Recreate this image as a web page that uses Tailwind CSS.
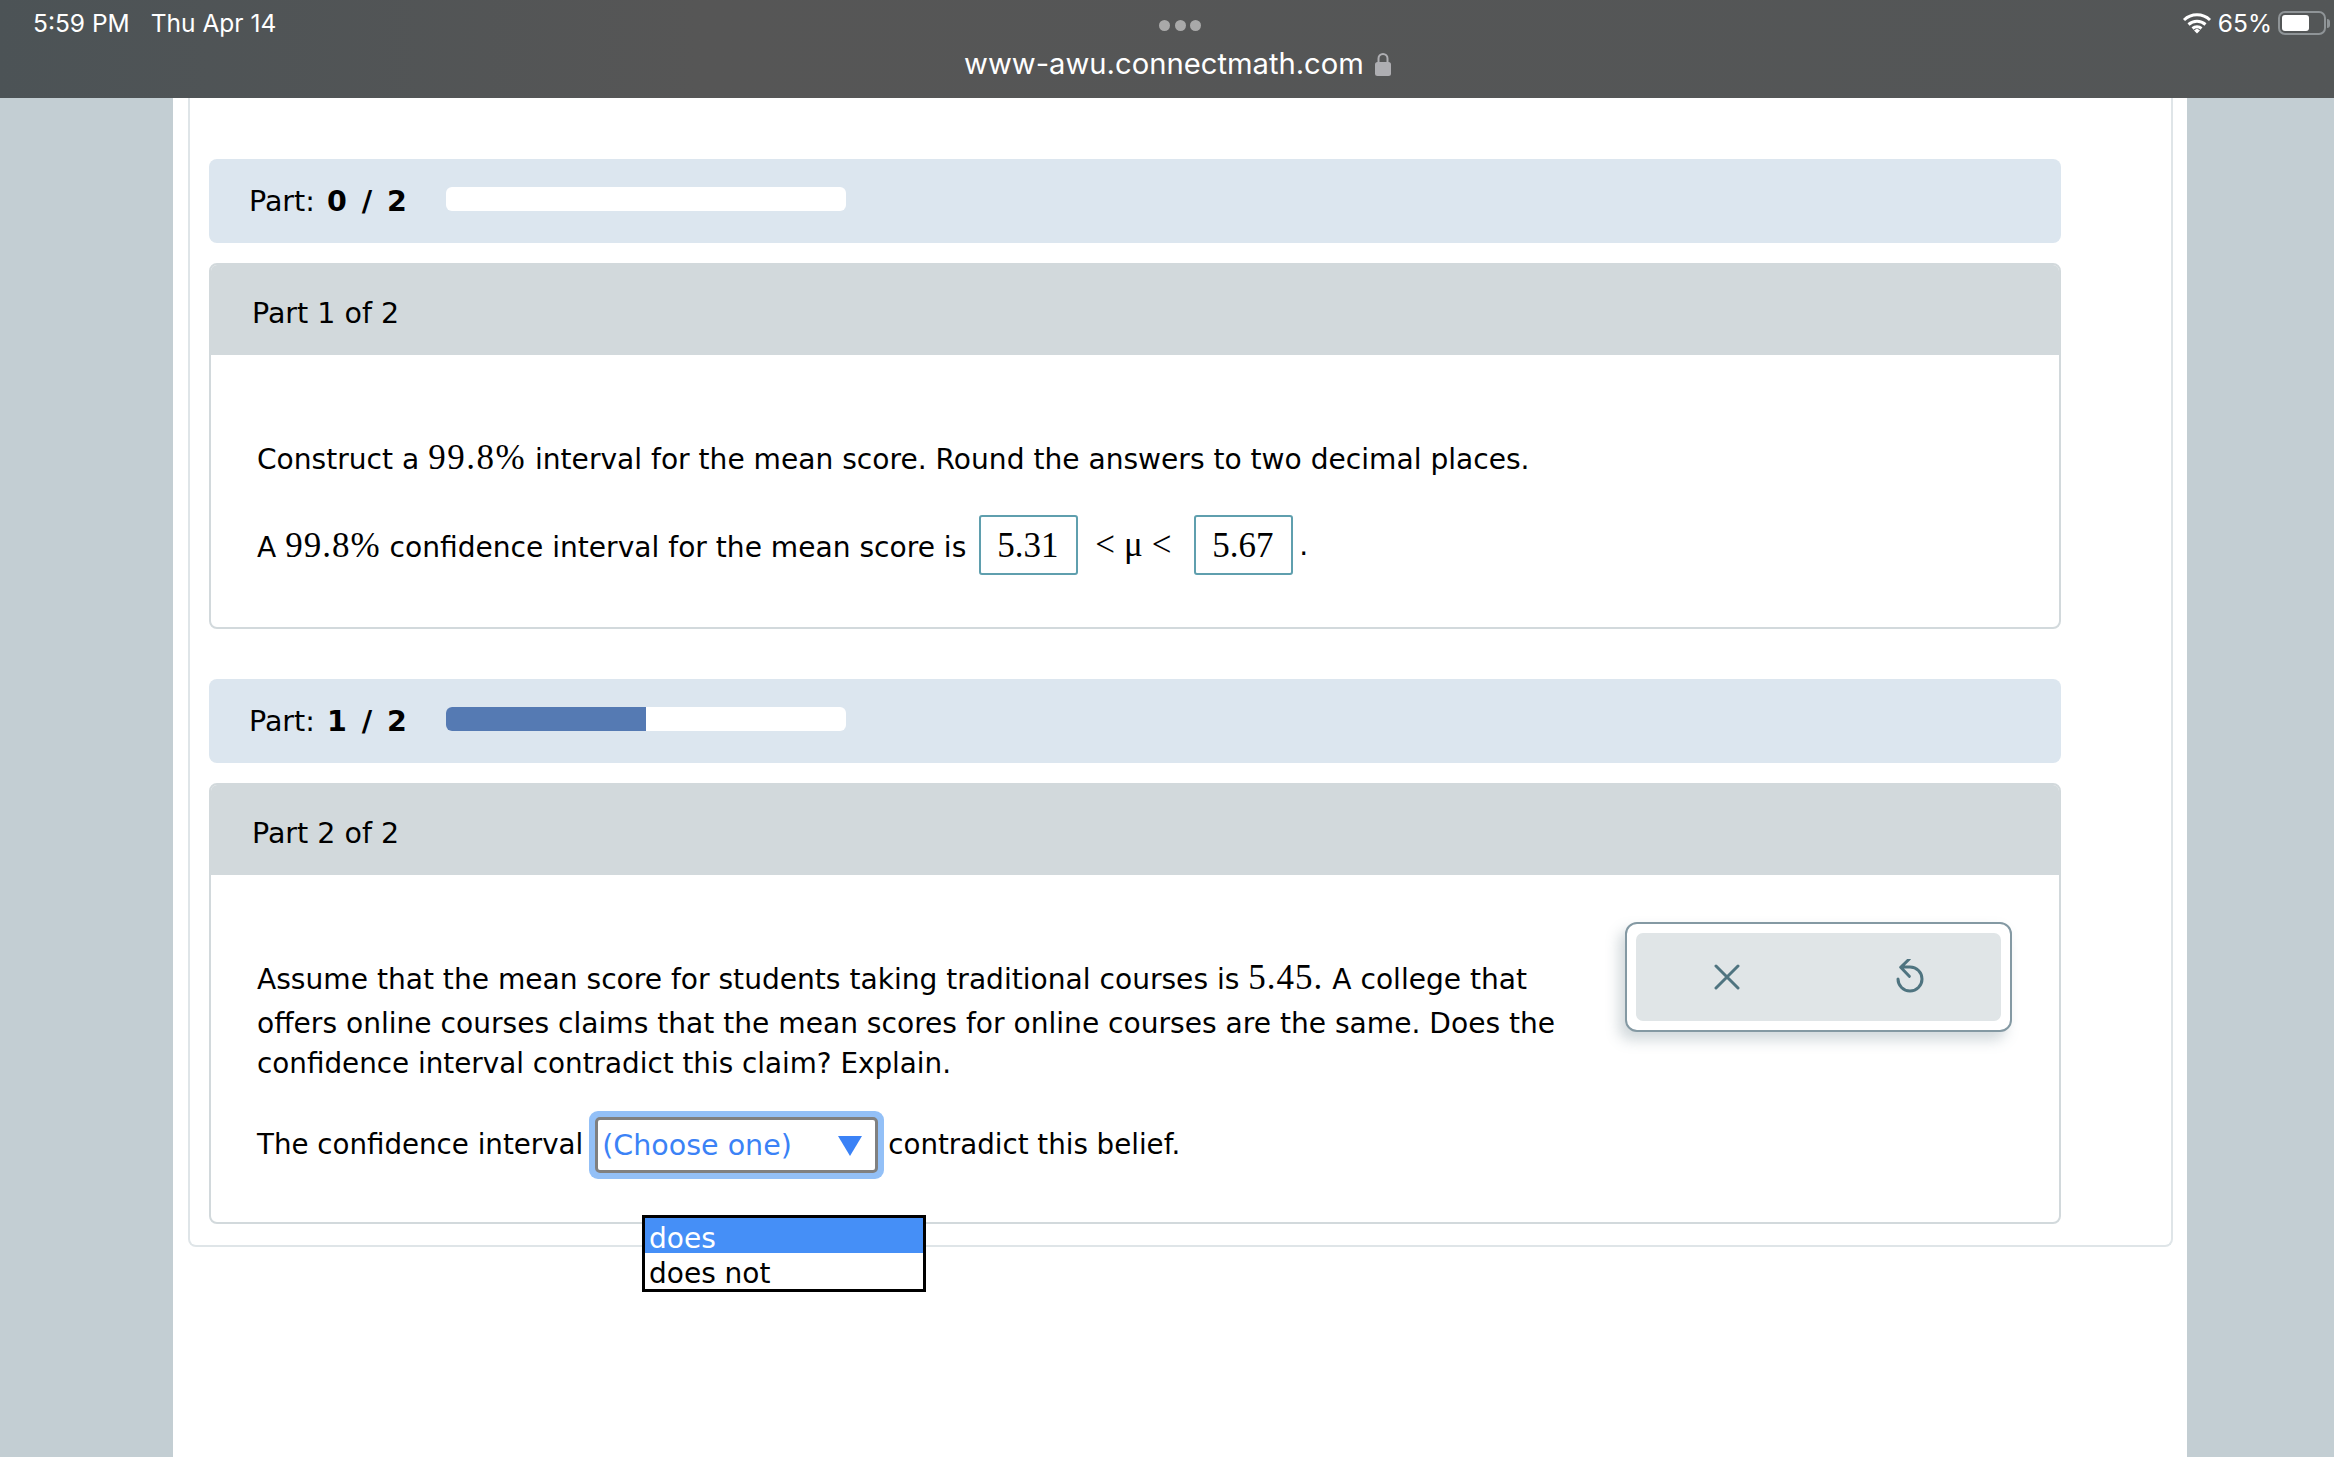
<!DOCTYPE html>
<html>
<head>
<meta charset="utf-8">
<script src="https://cdn.jsdelivr.net/npm/@tailwindcss/browser@4"></script>
</head>
<body class="m-0 w-[2334px] h-[1457px] overflow-hidden bg-[#c3ced3] font-['DejaVu_Sans',sans-serif] text-[28.100px] text-black">
<header class="relative h-[98px] bg-gradient-to-r from-[#4c5356] via-[#565656] via-30% to-[#535657] text-white font-['Inter',sans-serif]">
  <div class="flex items-start justify-between h-[49px] pl-[33px] pr-[4px] pt-[9px]">
    <div class="flex gap-[21px] text-[24.5px] leading-[28px]"><span>5:59 PM</span><span>Thu Apr 14</span></div>
    <div class="flex items-center gap-[6px] text-[24.5px] leading-[28px]">
      <svg width="30" height="22" viewBox="0 0 30 22"><path d="M2 8a19 19 0 0 1 26 0M6.500 12.500a13 13 0 0 1 17 0M10.500 16.500a7 7 0 0 1 9 0" fill="none" stroke="#fff" stroke-width="3"/><path d="M12 18.500l3-2 3 2-3 3z" fill="#fff"/></svg>
      <span>65%</span>
      <div class="flex items-center gap-[1px]">
        <div class="w-[48px] h-[24px] rounded-[7px] border-2 border-[#8f9497] p-[2px]"><div class="w-[27px] h-full rounded-[3px] bg-white"></div></div>
        <div class="w-[3px] h-[9px] rounded-r bg-[#8f9497]"></div>
      </div>
    </div>
  </div>
  <div class="absolute left-[1159px] top-[20px] flex gap-[4.500px]"><span class="size-[11px] rounded-full bg-[#a9a9a9]"></span><span class="size-[11px] rounded-full bg-[#a9a9a9]"></span><span class="size-[11px] rounded-full bg-[#a9a9a9]"></span></div>
  <div class="absolute left-[964px] top-[44px] flex items-center gap-[10px] text-[29.200px] leading-[40px]">
    <span>www-awu.connectmath.com</span>
    <svg width="18" height="25" viewBox="0 0 18 25"><path d="M4.500 11V6.500a4.500 4.500 0 0 1 9 0V11" fill="none" stroke="#aeaeb2" stroke-width="2"/><rect x="1" y="10" width="16" height="14" rx="2.500" fill="#aeaeb2"/></svg>
  </div>
</header>
<main class="ml-[173px] w-[2014px] h-[1359px] bg-white">
  <div class="relative ml-[15px] w-[1985px] h-[1149px] border-x-2 border-b-2 border-[#dfe5e8] rounded-b-[8px] pl-[19px] pr-[110px] pt-[61px]">
    <section class="h-[84px] rounded-[8px] bg-[#dce6ef] flex items-center pl-[40px] gap-[27px]">
      <div class="w-[170px] pt-[2px] whitespace-nowrap text-[28.500px]">Part: <b class="ml-[3px] [word-spacing:5px]">0 / 2</b></div>
      <div class="w-[400px] h-[24px] mb-[4px] rounded-[6px] bg-white"></div>
    </section>
    <section class="mt-[20px] h-[366px] rounded-[8px] border-2 border-[#d2d9dc] overflow-hidden">
      <div class="h-[90px] bg-[#d2d9dc] flex items-center pl-[41px] pt-[8px] text-[28.500px]">Part 1 of 2</div>
      <div class="pl-[46px]">
        <p class="mt-[83px] h-[40px] leading-[40px] whitespace-nowrap">Construct a <span class="font-['Liberation_Serif',serif] text-[35px] tracking-[1.500px]">99.8%</span> interval for the mean score. Round the answers to two decimal places.</p>
        <div class="mt-[37px] h-[60px] flex items-center whitespace-nowrap">
          <span class="pt-[3px]">A <span class="font-['Liberation_Serif',serif] text-[35px] tracking-[1px]">99.8%</span> confidence interval for the mean score is</span>
          <span class="ml-[13px] w-[99px] h-[60px] flex items-center justify-center pt-[2px] pr-[2px] rounded-[3px] border-[2.500px] border-[#5f9fae] font-['Liberation_Serif',serif] text-[35px]">5.31</span>
          <span class="w-[116px] pl-[3px] pt-[1px] text-center font-['Liberation_Serif',serif] text-[35px] tracking-[9px]">&lt;μ&lt;</span>
          <span class="w-[99px] h-[60px] flex items-center justify-center pt-[2px] pr-[2px] rounded-[3px] border-[2.500px] border-[#5f9fae] font-['Liberation_Serif',serif] text-[35px]">5.67</span>
          <span class="ml-[6px] pt-[3px]">.</span>
        </div>
      </div>
    </section>
    <section class="mt-[50px] h-[84px] rounded-[8px] bg-[#dce6ef] flex items-center pl-[40px] gap-[27px]">
      <div class="w-[170px] pt-[2px] whitespace-nowrap text-[28.500px]">Part: <b class="ml-[3px] [word-spacing:5px]">1 / 2</b></div>
      <div class="w-[400px] h-[24px] mb-[4px] rounded-[6px] bg-white overflow-hidden"><div class="w-[200px] h-full bg-[#557ab3]"></div></div>
    </section>
    <section class="mt-[20px] h-[441px] rounded-[8px] border-2 border-[#d2d9dc] overflow-hidden">
      <div class="h-[90px] bg-[#d2d9dc] flex items-center pl-[41px] pt-[8px] text-[28.500px]">Part 2 of 2</div>
      <div class="pl-[46px]">
        <p class="mt-[83px] h-[40px] leading-[40px] whitespace-nowrap">Assume that the mean score for students taking traditional courses is <span class="font-['Liberation_Serif',serif] text-[35px] tracking-[1px]">5.45.</span> A college that</p>
        <p class="mt-[6px] leading-[40px] whitespace-nowrap">offers online courses claims that the mean scores for online courses are the same. Does the<br><span class="text-[27.800px]">confidence interval contradict this claim? Explain.</span></p>
        <div class="mt-[27px] flex items-center h-[68px] whitespace-nowrap text-[27.700px]">
          <span class="mb-[1px]">The confidence interval</span>
          <div class="ml-[6px] w-[295px] h-[68px] rounded-[9px] bg-[#93c0f7] p-[6px]">
            <div class="h-full rounded-[5px] border-[3px] border-[#808080] bg-white flex items-center justify-between pl-[4px] pr-[13px] pt-[3px] text-[#3b82f6] text-[28.500px]">
              <span>(Choose one)</span>
              <svg width="24" height="20" viewBox="0 0 24 20" class="mb-[1px]"><path d="M0 0h24L12 20z" fill="#3b82f6"/></svg>
            </div>
          </div>
          <span class="ml-[4px] mb-[1px]">contradict this belief.</span>
        </div>
      </div>
    </section>
    <div class="absolute left-[1435px] top-[824px] w-[387px] h-[110px] rounded-[12px] border-2 border-[#8499a3] bg-white p-[9px] shadow-[-6px_8px_14px_rgba(90,115,125,0.28)]">
      <div class="h-full rounded-[7px] bg-[#e0e5e7] flex items-center justify-between pl-[78px] pr-[71px]">
        <svg width="26" height="26" viewBox="0 0 26 26"><path d="M2 2l22 22M24 2L2 24" stroke="#4f7480" stroke-width="3" stroke-linecap="round"/></svg>
        <svg width="40" height="40" viewBox="0 0 40 40" class="mt-[3px]"><path d="M8 20a12 12 0 1 0 12-12h-9M19.300 0l-8.600 8.300 8.600 9" fill="none" stroke="#4f7480" stroke-width="3" stroke-linecap="round" stroke-linejoin="round"/></svg>
      </div>
    </div>
    <div class="absolute left-[452px] top-[1117px] w-[284px] border-[3px] border-black bg-white text-[28px] leading-[36px]">
      <div class="h-[35px] pl-[4px] pt-[3px] bg-[#458ff7] text-white">does</div>
      <div class="h-[36px] pl-[4px] pt-[3px]">does not</div>
    </div>
  </div>
</main>
</body>
</html>
